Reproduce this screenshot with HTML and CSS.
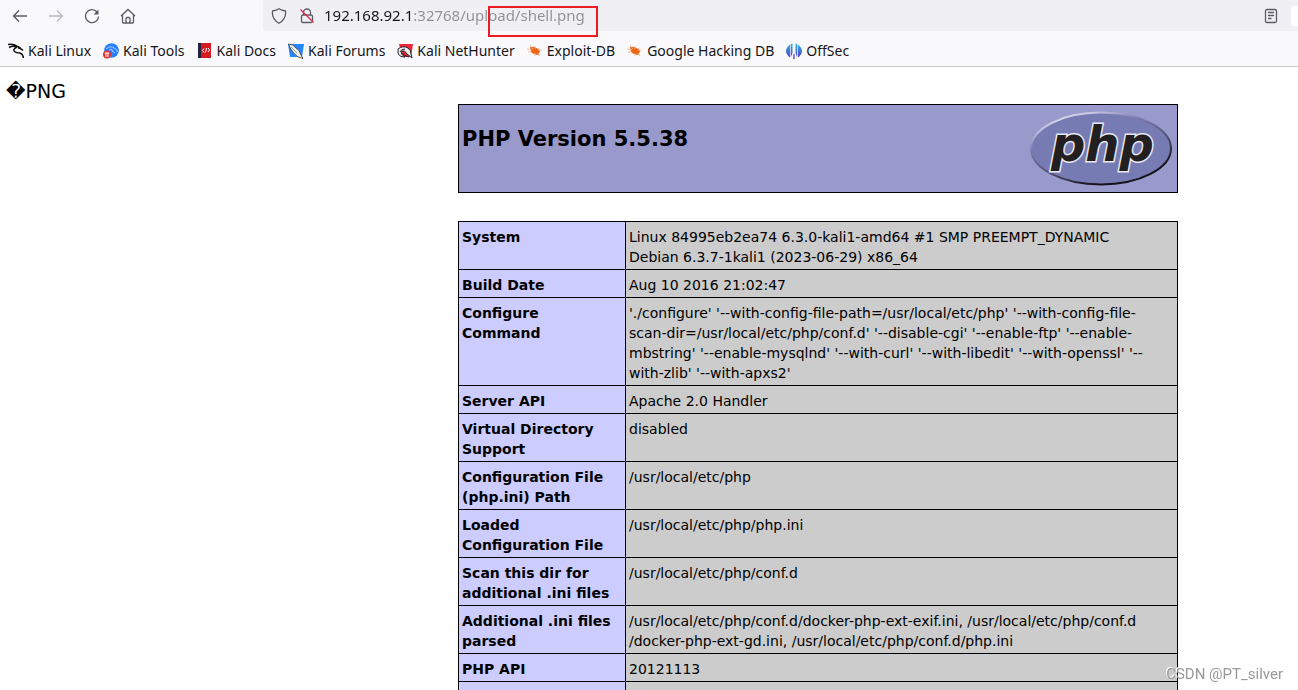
FILE: index.html
```html
<!DOCTYPE html>
<html lang="en">
<head>
<meta charset="utf-8">
<title>phpinfo()</title>
<link rel="stylesheet" href="styles.css">
</head>
<body>
<header class="browser">
  <div class="toolbar">
    <nav class="nav" aria-label="Navigation">
      <button class="tool" type="button" aria-label="Back"><svg class="icon" viewBox="0 0 16 16"><path d="M15 8H1.500M7 2.500L1.500 8L7 13.500"/></svg></button>
      <button class="tool tool-off" type="button" aria-label="Forward" disabled><svg class="icon" viewBox="0 0 16 16"><path d="M1 8H14.500M9 2.500L14.500 8L9 13.500"/></svg></button>
      <button class="tool" type="button" aria-label="Reload"><svg class="icon" viewBox="0 0 16 16"><path d="M13 4A6.500 6.500 0 1 0 14.500 8.500"/><path d="M14.500 1.500V6.500H9.500Z" fill="#5b5b66" stroke="none"/></svg></button>
      <button class="tool" type="button" aria-label="Home"><svg class="icon" viewBox="0 0 16 16"><path d="M1 8L8 1.500L15 8M2.500 7V14Q2.500 15 3.500 15H12.500Q13.500 15 13.500 14V7M6 15V10.500Q6 9.500 7 9.500H9Q10 9.500 10 10.500V15"/></svg></button>
    </nav>
    <div class="address">
      <svg class="icon" viewBox="0 0 16 16"><path d="M8 .8Q10.500 2.500 14.500 3Q15.500 11 8 15.300Q.5 11 1.500 3Q5.500 2.500 8 .8Z"/></svg>
      <svg class="icon" viewBox="0 0 16 16"><path d="M4.500 7V4.500A3.500 3.500 0 0 1 11.500 4.500V7M4 7H12Q13.500 7 13.500 8.500V13Q13.500 14.500 12 14.500H4Q2.500 14.500 2.500 13V8.500Q2.500 7 4 7Z"/><path d="M1.500 1.500L14.500 14.500" stroke="#e22850"/></svg>
      <input class="url" type="text" aria-label="Address" value="192.168.92.1:32768/upload/shell.png" spellcheck="false">
      <button class="tool" type="button" aria-label="Reader view"><svg class="icon" viewBox="0 0 16 16"><rect x="2.500" y="1.500" width="11" height="13" rx="1.500"/><path d="M5 4.500H11M5 7.500H11M5 10.500H8.500"/></svg></button>
      <span class="chip"></span>
    </div>
  </div>
  <nav class="bookmarks" aria-label="Bookmarks">
    <a class="bookmark" href="#"><svg class="fav" viewBox="0 0 16 16"><path d="M0 1.500Q6 .5 8.500 3Q12 4 13.500 6.500M1 4.500Q5 2.500 9 4M9 4Q4.500 6 6.500 8.500Q8 10 12 10Q15 11 15.500 15M10 5Q13 5 15 7.500" fill="none" stroke="#111" stroke-width="1.500"/></svg>Kali Linux</a>
    <a class="bookmark" href="#"><svg class="fav" viewBox="0 0 16 16"><circle cx="8.500" cy="7.500" r="7.300" fill="#277fff"/><path d="M3 6Q8 2 11 5Q14 6 14.500 9M6 7Q10 5 9 8L12 10" fill="none" stroke="#b4d5ff"/><circle cx="4" cy="11.500" r="4" fill="#e5322d"/><path d="M1.800 10H6.200M3 10V14M5 10V14" stroke="#fff" fill="none"/></svg>Kali Tools</a>
    <a class="bookmark" href="#"><svg class="fav" viewBox="0 0 16 16"><rect x="1" y="0" width="13" height="15" fill="#d51b20"/><rect x="1" width="3" height="15" fill="#25233f"/><path d="M7 5.500L5.500 7.500L7 9.500M11 5L12.500 7L11 9M9.500 5L8.500 9.500" fill="none" stroke="#fff"/></svg>Kali Docs</a>
    <a class="bookmark" href="#"><svg class="fav" viewBox="0 0 16 16"><path d="M0 1H16L14 14H2Z" fill="#2587f8"/><path d="M.5 1Q5 1 8 5Q12 7 12.500 11L15 15.500Q9 14.500 6 10.500Q2 6 .5 1Z" fill="#eee" stroke="#333" stroke-width=".8"/><path d="M3 4L9 10" stroke="#888" stroke-width=".8"/></svg>Kali Forums</a>
    <a class="bookmark" href="#"><svg class="fav" viewBox="0 0 16 16"><path d="M2 1H16L14 14H5Z" fill="#ed2939"/><path d="M1 6Q6 2 11 5Q14 7 14 11L15 15L10 11Q8 7 5 8Q3 11 8 14Q1 14 1 9Z" fill="#eee" stroke="#222"/><path d="M3 9Q4 6 8 6M5 10Q7 13 12 14" fill="none" stroke="#222"/></svg>Kali NetHunter</a>
    <a class="bookmark" href="#"><svg class="fav" viewBox="0 0 16 16"><path d="M3 4Q7 3 11 6L13 8L11.500 12Q7 12 4 9Z" fill="#ef6516"/><path d="M0 6L5 6.500M3 2L6 6M8 3L8 6M11 5L15 8M1 9H5M8 10V13M11 10L13 13" fill="none" stroke="#f6b48a" stroke-width=".8"/></svg>Exploit-DB</a>
    <a class="bookmark" href="#"><svg class="fav" viewBox="0 0 16 16"><path d="M3 4Q7 3 11 6L13 8L11.500 12Q7 12 4 9Z" fill="#ef6516"/><path d="M0 6L5 6.500M3 2L6 6M8 3L8 6M11 5L15 8M1 9H5M8 10V13M11 10L13 13" fill="none" stroke="#f6b48a" stroke-width=".8"/></svg>Google Hacking DB</a>
    <a class="bookmark" href="#"><svg class="fav" viewBox="0 0 16 16"><defs><linearGradient id="off" gradientUnits="userSpaceOnUse" x1="0" y1="0" x2="0" y2="16"><stop stop-color="#25b7d3"/><stop offset="1" stop-color="#5b35d5"/></linearGradient></defs><path d="M4 1.500Q-4 8 4 14.500ZM4.700 1.200L6.500.5V10L4.700 14.500ZM12 1.500Q20 8 12 14.500ZM11.300 1.200L9.500.5V10L11.300 14.500ZM7.300 11H8.700V16H7.300Z" fill="url(#off)"/></svg>OffSec</a>
  </nav>
  <div class="marker"></div>
</header>
<main class="page">
  <p class="raw">&#xFFFD;PNG</p>
  <div class="info">
    <div class="banner">
      <h1 class="title">PHP Version 5.5.38</h1>
      <svg class="logo" viewBox="0 0 144 80" role="img" aria-label="PHP logo">
        <defs>
          <linearGradient id="rim" x1=".2" y1="0" x2=".8" y2="1"><stop stop-color="#eeeefa"/><stop offset=".3" stop-color="#7a7cae"/><stop offset=".6" stop-color="#505070"/><stop offset=".85" stop-color="#15131a"/></linearGradient>
        </defs>
        <ellipse cx="71" cy="40" rx="70" ry="36" fill="#777bb3" stroke="url(#rim)" stroke-width="2"/>
        <text class="logo-text" x="21" y="52">php</text>
      </svg>
    </div>
    <table class="config">
      <tbody>
        <tr><th scope="row">System</th><td>Linux 84995eb2ea74 6.3.0-kali1-amd64 #1 SMP PREEMPT_DYNAMIC<br>Debian 6.3.7-1kali1 (2023-06-29) x86_64</td></tr>
        <tr><th scope="row">Build Date</th><td>Aug 10 2016 21:02:47</td></tr>
        <tr><th scope="row">Configure<br>Command</th><td>'./configure' '--with-config-file-path=/usr/local/etc/php' '--with-config-file-<br>scan-dir=/usr/local/etc/php/conf.d' '--disable-cgi' '--enable-ftp' '--enable-<br>mbstring' '--enable-mysqlnd' '--with-curl' '--with-libedit' '--with-openssl' '--<br>with-zlib' '--with-apxs2'</td></tr>
        <tr><th scope="row">Server API</th><td>Apache 2.0 Handler</td></tr>
        <tr><th scope="row">Virtual Directory Support</th><td>disabled</td></tr>
        <tr><th scope="row">Configuration File (php.ini) Path</th><td>/usr/local/etc/php</td></tr>
        <tr><th scope="row">Loaded Configuration File</th><td>/usr/local/etc/php/php.ini</td></tr>
        <tr><th scope="row">Scan this dir for additional .ini files</th><td>/usr/local/etc/php/conf.d</td></tr>
        <tr><th scope="row">Additional .ini files parsed</th><td>/usr/local/etc/php/conf.d/docker-php-ext-exif.ini, /usr/local/etc/php/conf.d<br>/docker-php-ext-gd.ini, /usr/local/etc/php/conf.d/php.ini</td></tr>
        <tr><th scope="row">PHP API</th><td>20121113</td></tr>
        <tr><th scope="row">&nbsp;</th><td></td></tr>
      </tbody>
    </table>
  </div>
</main>
<div class="watermark">CSDN @PT_silver</div>
</body>
</html>
```
FILE: styles.css
```css
* { box-sizing: border-box; }
body {
  margin: 0;
  height: 100vh;
  overflow: hidden;
  background: #fff;
  color: #000;
  font-family: "DejaVu Sans", sans-serif;
}
.browser {
  position: relative;
  background: #f9f9fb;
  border-bottom: 1px solid #ccc;
  font-family: "Noto Sans", sans-serif;
  color: #15141a;
}
.toolbar { display: flex; gap: 127px; height: 31px; }
.nav { display: flex; align-items: center; gap: 20px; padding-left: 12px; flex: none; }
.tool { display: flex; padding: 0; border: 0; background: none; }
.tool-off { opacity: .4; }
.icon { width: 16px; height: 16px; fill: none; stroke: #5b5b66; stroke-width: 1.3; flex: none; }
.address {
  flex: 1;
  display: flex;
  align-items: center;
  gap: 12px;
  padding-left: 8px;
  background: #f0f0f4;
  border-bottom-left-radius: 4px;
}
.url {
  flex: 1;
  min-width: 0;
  height: 24px;
  margin: 0 0 2px -3px;
  padding: 0;
  border: 0;
  outline: 0;
  font: 15px "Noto Sans", sans-serif;
  color: transparent;
  background: linear-gradient(to right, #15141a 89px, #8f8f98 89px);
  -webkit-background-clip: text;
  background-clip: text;
}
.chip { width: 7px; height: 20px; background: #fff; border-radius: 3px 0 0 3px; }
.bookmarks { display: flex; align-items: center; gap: 12px; height: 35px; padding: 4px 8px 0; }
.bookmark {
  display: flex;
  align-items: center;
  gap: 4px;
  color: inherit;
  font-size: 14px;
  line-height: 20px;
  text-decoration: none;
  white-space: nowrap;
}
.fav { width: 16px; height: 16px; flex: none; }
.marker { position: absolute; left: 488px; top: 6px; width: 110px; height: 31px; border: 2px solid #ed1c24; }
.raw { margin: 0; padding: 12px 0 1px 6px; font-size: 19px; line-height: 24px; }
.info { max-width: 720px; margin: 0 120px 0 auto; }
.banner {
  display: flex;
  justify-content: space-between;
  padding: 3px;
  border: 1px solid #000;
  background: #9999cc;
}
.title { margin: 18px 0 0; font-size: 21px; line-height: 26px; }
.logo { width: 144px; height: 81px; flex: none; }
.logo-text {
  font: italic bold 48px "DejaVu Sans", sans-serif;
  fill: #231f20;
  stroke: #e8e8f2;
  stroke-width: 3px;
  paint-order: stroke;
}
.config { width: 100%; margin-top: 28px; border-collapse: collapse; font-size: 14px; line-height: 20px; }
.config th, .config td { padding: 5px 3px 2px; border: 1px solid #000; text-align: left; vertical-align: top; }
.config th { width: 167px; background: #ccccff; }
.config td { background: #ccc; }
.watermark {
  position: fixed;
  right: 15px;
  bottom: 6px;
  font: 15px/20px Roboto, sans-serif;
  color: #999;
  text-shadow: -1px -1px 0 #fff;
}
```
